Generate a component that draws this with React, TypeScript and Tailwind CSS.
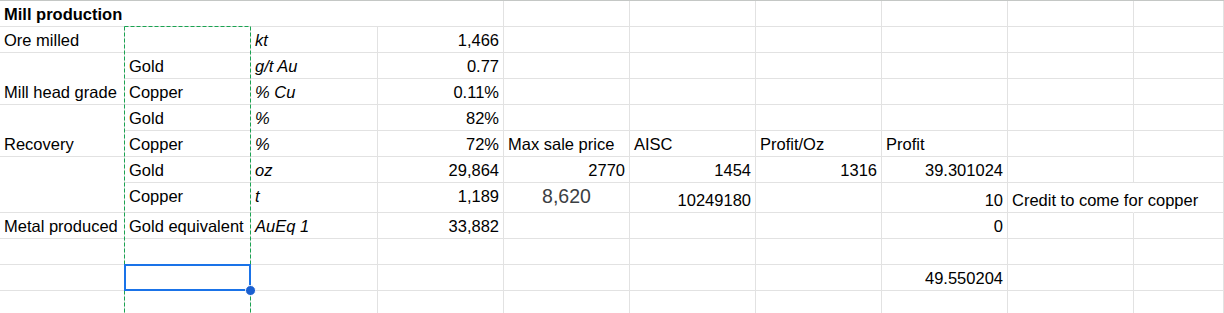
import React from "react";

type C = {
  t?: string;
  a?: "l" | "r" | "c";
  v?: "b" | "m";
  i?: boolean;
  b?: boolean;
  span4?: boolean;
  rs2?: boolean;
  over?: boolean;
  big?: boolean;
};

const e = (n: number): C[] => Array.from({ length: n }, () => ({}));

const rows: C[][] = [
  [{ t: "Mill production", b: true, span4: true }, ...e(6)],
  [{ t: "Ore milled" }, {}, { t: "kt", i: true }, { t: "1,466", a: "r" }, ...e(6)],
  [{ t: "Mill head grade", rs2: true }, { t: "Gold" }, { t: "g/t Au", i: true }, { t: "0.77", a: "r" }, ...e(6)],
  [{ t: "Copper" }, { t: "% Cu", i: true }, { t: "0.11%", a: "r" }, ...e(6)],
  [{ t: "Recovery", rs2: true }, { t: "Gold" }, { t: "%", i: true }, { t: "82%", a: "r" }, ...e(6)],
  [
    { t: "Copper" },
    { t: "%", i: true },
    { t: "72%", a: "r" },
    { t: "Max sale price" },
    { t: "AISC" },
    { t: "Profit/Oz" },
    { t: "Profit" },
    ...e(2),
  ],
  [
    { rs2: true },
    { t: "Gold" },
    { t: "oz", i: true },
    { t: "29,864", a: "r" },
    { t: "2770", a: "r" },
    { t: "1454", a: "r" },
    { t: "1316", a: "r" },
    { t: "39.301024", a: "r" },
    ...e(2),
  ],
  [
    { t: "Copper", v: "m" },
    { t: "t", i: true, v: "m" },
    { t: "1,189", a: "r", v: "m" },
    { t: "8,620", a: "c", v: "m", big: true },
    { t: "10249180", a: "r" },
    {},
    { t: "10", a: "r" },
    { t: "Credit to come for copper", over: true },
    {},
  ],
  [
    { t: "Metal produced" },
    { t: "Gold equivalent" },
    { t: "AuEq 1", i: true },
    { t: "33,882", a: "r" },
    ...e(3),
    { t: "0", a: "r" },
    ...e(2),
  ],
  e(10),
  [...e(7), { t: "49.550204", a: "r" }, ...e(2)],
  e(10),
];

function Cell({ c }: { c: C }) {
  const cls = [
    "flex min-w-0 border-b border-[#e2e2e2] px-[4px] whitespace-nowrap",
    c.over ? "overflow-visible border-r border-r-transparent z-10" : "overflow-hidden border-r",
    c.v === "m" ? "items-center pb-[2px]" : "items-end pb-[2.5px]",
    c.a === "r" ? "justify-end" : c.a === "c" ? "justify-center" : "justify-start",
    c.i ? "italic" : "",
    c.b ? "font-bold" : "",
    c.span4 ? "col-span-4" : "",
    c.rs2 ? "row-span-2" : "",
    c.big ? "text-[19.5px] text-[#3c4043] leading-normal" : "leading-[19px]",
  ].join(" ");
  return <div className={cls}>{c.t ?? ""}</div>;
}

export default function App() {
  return (
    <div className="w-[1224px] h-[313px] overflow-hidden bg-white text-black text-[16.5px] font-['Liberation_Sans',Arial,sans-serif]">
      <div className="relative border-t border-[#c4c7c5] grid grid-cols-[125px_126px_127px_126px_126px_126px_126px_126px_126px_1fr] grid-rows-[26px_26px_26px_26px_26px_26px_26px_30px_26px_26px_26px_26px]">
        {rows.flat().map((c, k) => (
          <Cell key={k} c={c} />
        ))}
        <svg
          className="absolute left-0 top-[-1px] pointer-events-none z-20"
          width="300"
          height="320"
          viewBox="0 0 300 320"
        >
          <g stroke="#1aa351" strokeWidth="1" strokeDasharray="4 2" fill="none">
            <line x1="124.5" y1="26.5" x2="124.5" y2="320" />
            <line x1="250.5" y1="26.5" x2="250.5" y2="320" />
            <line x1="124.5" y1="26.5" x2="250.5" y2="26.5" />
          </g>
        </svg>
        <div className="absolute left-[124px] top-[263px] w-[127px] h-[27px] border-2 border-[#1a73e8] z-30 pointer-events-none" />
        <div className="absolute left-[245px] top-[284px] w-[11px] h-[11px] rounded-full bg-[#1a5fd0] border border-white z-30" />
      </div>
    </div>
  );
}
